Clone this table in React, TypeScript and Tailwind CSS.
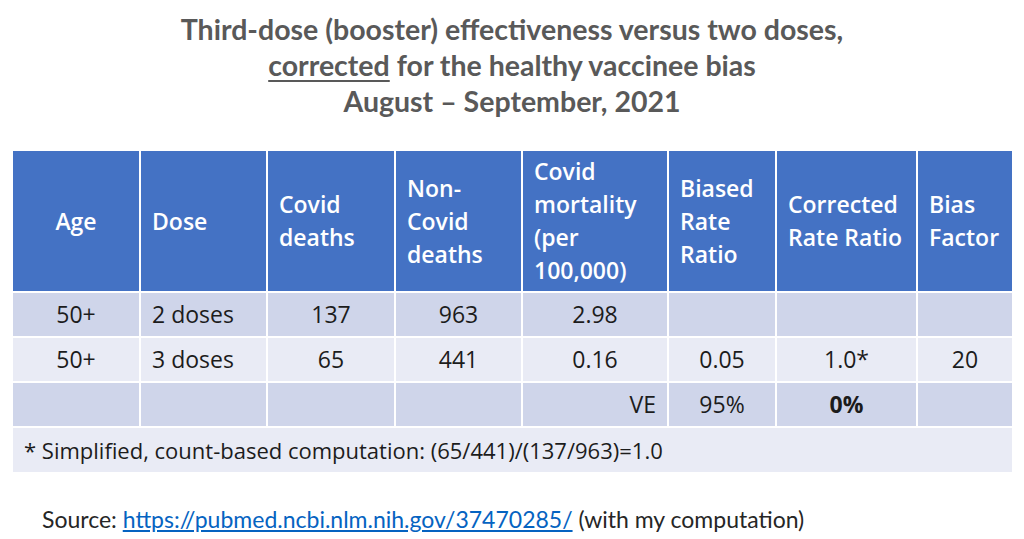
import React from 'react';

const headers = [
  { label: ['Age'], w: 'w-[127px]', align: 'text-center' },
  { label: ['Dose'], w: 'w-[127px]', align: 'text-left' },
  { label: ['Covid', 'deaths'], w: 'w-[128px]', align: 'text-left' },
  { label: ['Non-', 'Covid', 'deaths'], w: 'w-[127px]', align: 'text-left' },
  { label: ['Covid', 'mortality', '(per', '100,000)'], w: 'w-[146px]', align: 'text-left' },
  { label: ['Biased', 'Rate', 'Ratio'], w: 'w-[108px]', align: 'text-left' },
  { label: ['Corrected', 'Rate Ratio'], w: 'w-[141px]', align: 'text-left' },
  { label: ['Bias', 'Factor'], w: 'w-[95px]', align: 'text-left' },
];

const rows = [
  { bg: 'bg-[#cfd5ea]', cells: ['50+', '2 doses', '137', '963', '2.98', '', '', ''] },
  { bg: 'bg-[#e9ebf5]', cells: ['50+', '3 doses', '65', '441', '0.16', '0.05', '1.0*', '20'] },
];

export default function App() {
  return (
    <div className="w-[1024px] h-[539px] bg-white overflow-hidden font-['Open_Sans',sans-serif]">
      {/* title */}
      <div className="pt-[11px] text-center text-[28.5px] leading-[36px] font-bold text-[#595959] font-['Lato',sans-serif]">
        <div>Third-dose (booster) effectiveness versus two doses,</div>
        <div>
          <span className="underline decoration-2 underline-offset-4">corrected</span> for the healthy vaccinee bias
        </div>
        <div>August – September, 2021</div>
      </div>

      {/* table */}
      <div className="mt-[32px] pl-[13px]">
        <table className="w-[999px] table-fixed border-collapse text-[23px]">
          <thead>
            <tr className="h-[141px] bg-[#4472c4] text-white">
              {headers.map((h, i) => (
                <th
                  key={i}
                  className={`${h.w} ${h.align} border-2 border-white border-t-0 first:border-l-0 last:border-r-0 px-[11px] font-semibold leading-[33px] align-middle`}
                >
                  {h.label.map((l, j) => (
                    <div key={j} className="whitespace-nowrap">{l}</div>
                  ))}
                </th>
              ))}
            </tr>
          </thead>
          <tbody className="text-[#1c1c1c]">
            {rows.map((r, i) => (
              <tr key={i} className={`h-[45px] ${r.bg}`}>
                {r.cells.map((c, j) => (
                  <td
                    key={j}
                    className={`border-2 border-white first:border-l-0 last:border-r-0 px-[11px] ${j === 1 ? 'text-left' : 'text-center'}`}
                  >
                    {c}
                  </td>
                ))}
              </tr>
            ))}
            <tr className="h-[45px] bg-[#cfd5ea]">
              <td className="border-2 border-white border-l-0" />
              <td className="border-2 border-white" />
              <td className="border-2 border-white" />
              <td className="border-2 border-white" />
              <td className="border-2 border-white px-[11px] text-right">VE</td>
              <td className="border-2 border-white text-center">95%</td>
              <td className="border-2 border-white text-center font-bold">0%</td>
              <td className="border-2 border-white border-r-0" />
            </tr>
            <tr className="h-[45px] bg-[#e9ebf5]">
              <td colSpan={8} className="border-2 border-white border-x-0 border-b-0 px-[11px] text-[22px] text-left">
                * Simplified, count-based computation: (65/441)/(137/963)=1.0
              </td>
            </tr>
          </tbody>
        </table>
      </div>

      {/* source */}
      <div className="mt-[30px] pl-[42px] text-[23px] text-[#262626] font-['Lato',sans-serif]">
        Source:{' '}
        <a href="#" className="text-[#0563c1] underline underline-offset-2">
          https://pubmed.ncbi.nlm.nih.gov/37470285/
        </a>{' '}
        (with my computation)
      </div>
    </div>
  );
}
